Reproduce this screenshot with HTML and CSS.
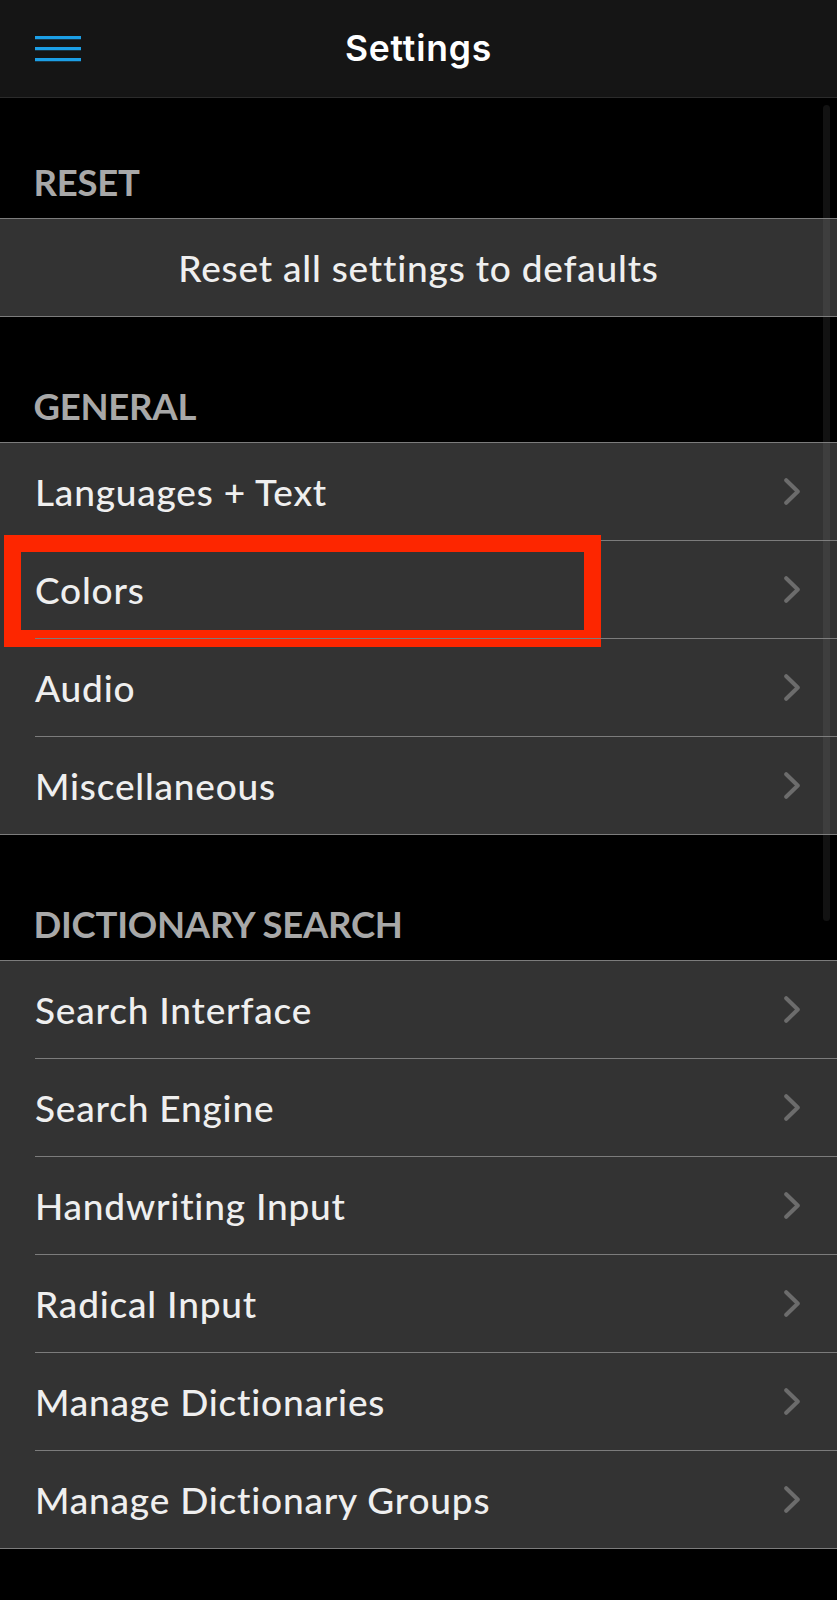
FILE: index.html
```html
<!DOCTYPE html>
<html lang="en">
<head>
<meta charset="utf-8">
<title>Settings</title>
<link rel="stylesheet" href="styles.css">
</head>
<body>
<header class="topbar">
  <div class="topbar-left">
    <svg class="menu-icon" width="46" height="26" viewBox="0 0 46 26" aria-hidden="true">
      <line x1="0" y1="1.7" x2="46" y2="1.7"/>
      <line x1="0" y1="12.7" x2="46" y2="12.7"/>
      <line x1="0" y1="23.7" x2="46" y2="23.7"/>
    </svg>
  </div>
  <h1 class="title">Settings</h1>
  <div class="topbar-right"></div>
</header>

<main class="content">
  <section class="group first">
    <h2 class="group-title">RESET</h2>
    <ul class="list">
      <li class="row center"><div class="row-inner"><span class="label">Reset all settings to defaults</span></div></li>
    </ul>
  </section>

  <section class="group">
    <h2 class="group-title">GENERAL</h2>
    <ul class="list">
      <li class="row"><div class="row-inner"><span class="label">Languages + Text</span><svg class="chev" viewBox="0 0 16 27"><polyline points="2.2,2.2 13.8,13.5 2.2,24.8"/></svg></div></li>
      <li class="row highlighted"><div class="row-inner"><span class="label">Colors</span><svg class="chev" viewBox="0 0 16 27"><polyline points="2.2,2.2 13.8,13.5 2.2,24.8"/></svg></div><span class="highlight-box"></span></li>
      <li class="row"><div class="row-inner"><span class="label">Audio</span><svg class="chev" viewBox="0 0 16 27"><polyline points="2.2,2.2 13.8,13.5 2.2,24.8"/></svg></div></li>
      <li class="row"><div class="row-inner"><span class="label">Miscellaneous</span><svg class="chev" viewBox="0 0 16 27"><polyline points="2.2,2.2 13.8,13.5 2.2,24.8"/></svg></div></li>
    </ul>
  </section>

  <section class="group">
    <h2 class="group-title">DICTIONARY SEARCH</h2>
    <ul class="list">
      <li class="row"><div class="row-inner"><span class="label">Search Interface</span><svg class="chev" viewBox="0 0 16 27"><polyline points="2.2,2.2 13.8,13.5 2.2,24.8"/></svg></div></li>
      <li class="row"><div class="row-inner"><span class="label">Search Engine</span><svg class="chev" viewBox="0 0 16 27"><polyline points="2.2,2.2 13.8,13.5 2.2,24.8"/></svg></div></li>
      <li class="row"><div class="row-inner"><span class="label">Handwriting Input</span><svg class="chev" viewBox="0 0 16 27"><polyline points="2.2,2.2 13.8,13.5 2.2,24.8"/></svg></div></li>
      <li class="row"><div class="row-inner"><span class="label">Radical Input</span><svg class="chev" viewBox="0 0 16 27"><polyline points="2.2,2.2 13.8,13.5 2.2,24.8"/></svg></div></li>
      <li class="row"><div class="row-inner"><span class="label">Manage Dictionaries</span><svg class="chev" viewBox="0 0 16 27"><polyline points="2.2,2.2 13.8,13.5 2.2,24.8"/></svg></div></li>
      <li class="row"><div class="row-inner"><span class="label">Manage Dictionary Groups</span><svg class="chev" viewBox="0 0 16 27"><polyline points="2.2,2.2 13.8,13.5 2.2,24.8"/></svg></div></li>
    </ul>
  </section>

  <div class="scroll-indicator"></div>
</main>
</body>
</html>
```

FILE: styles.css
```css
* { box-sizing: border-box; }

html, body {
  margin: 0;
  padding: 0;
  background: #000;
}

body {
  font-family: "Lato", "Open Sans", sans-serif;
  color: #eeeeee;
  -webkit-font-smoothing: antialiased;
}

.topbar {
  display: grid;
  grid-template-columns: 1fr auto 1fr;
  align-items: center;
  height: 98px;
  background: #151515;
  border-bottom: 1px solid #2b2b2b;
}

.topbar-left {
  padding-left: 35px;
  display: flex;
  align-items: center;
}

.menu-icon {
  display: block;
  stroke: #1c9fe6;
  stroke-width: 3.2;
}

.title {
  margin: 0;
  font-family: "Inter", "Liberation Sans", sans-serif;
  font-weight: 600;
  font-size: 35.5px;
  line-height: 40px;
  color: #ffffff;
  letter-spacing: 0.8px;
}

.content {
  position: relative;
}

.group-title {
  margin: 0;
  height: 125px;
  display: flex;
  align-items: flex-end;
  padding: 0 0 14px 33.5px;
  font-size: 36.5px;
  line-height: 44px;
  font-weight: 700;
  color: #a8a8a8;
  letter-spacing: -0.25px;
}

.group.first .group-title {
  height: 120px;
}

.list {
  list-style: none;
  margin: 0;
  padding: 0;
  background: #333333;
  border-top: 1px solid #7c7c7c;
  border-bottom: 1px solid #7c7c7c;
}

.row {
  position: relative;
  padding-left: 35px;
}

.row-inner {
  display: flex;
  align-items: center;
  justify-content: space-between;
  height: 97px;
  box-sizing: content-box;
  padding-right: 37px;
}

.row + .row .row-inner {
  border-top: 1px solid #7c7c7c;
}

.row.center {
  padding-left: 0;
}

.row.center .row-inner {
  justify-content: center;
  padding-right: 0;
}

.label {
  font-size: 37px;
  line-height: 44px;
  font-weight: 500;
  letter-spacing: 0.8px;
  color: #efefef;
}

.chev {
  width: 16px;
  height: 27px;
  flex: none;
  fill: none;
  stroke: #6c6c6c;
  stroke-width: 4;
  stroke-linecap: round;
  stroke-linejoin: round;
}

.highlight-box {
  position: absolute;
  left: 3.5px;
  top: -5px;
  width: 597px;
  height: 112px;
  border: 17px solid #fd2600;
  pointer-events: none;
}

.scroll-indicator {
  position: absolute;
  top: 7px;
  left: 823px;
  width: 7px;
  height: 816px;
  border-radius: 4px;
  background: rgba(140, 140, 140, 0.13);
}
```
